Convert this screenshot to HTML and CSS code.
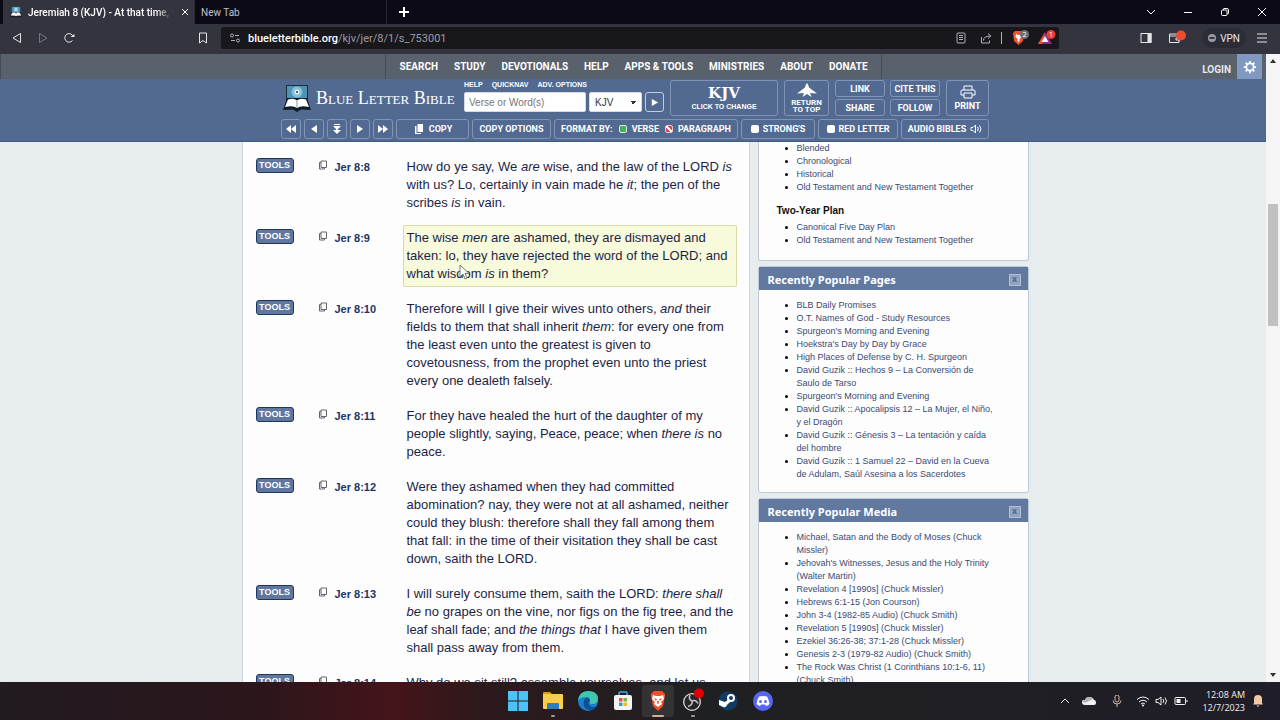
FILE: index.html
```html
<!DOCTYPE html>
<html lang="en">

<head>
    <meta charset="UTF-8">
    <meta name="viewport" content="width=device-width, initial-scale=1.0">
    <title>Jeremiah 8 (KJV) - At that time, saith the LORD</title>
    <link rel="stylesheet" href="styles.css">
</head>

<body>
    <!-- shared symbols -->
    <svg class="defs" aria-hidden="true">
        <symbol id="copy" viewBox="0 0 10 10">
            <path d="M3 1h5.500v6.500h-5.500z M3 2.500h-1.500v6.500h5v-1.500" fill="none" stroke="currentColor" />
        </symbol>
        <symbol id="logo" viewBox="0 0 28 28">
            <rect x="3" y="1" width="22" height="18" fill="#17303f" />
            <rect x="4" y="2" width="20" height="13" fill="#4f93b4" />
            <circle cx="14" cy="8" r="5.500" fill="#86bfd8" />
            <circle cx="14" cy="8" r="2.500" fill="#e2f4fb" />
            <circle cx="14" cy="8" r="1" fill="#1d3b50" />
            <path d="M4 14L0 26l10-.5 4 2.500 4-2.500 10 .5-4-12z" fill="#101c28" />
            <path d="M5 15.500q6-2 9 1 3-3 9-1l3 7.500q-8-2-12 1-4-3-12-1z" fill="#fff" />
            <path d="M14 16.500v7" stroke="#8a97a5" />
        </symbol>
    </svg>

    <header class="titlebar">
        <div class="tab active">
            <svg class="favicon" viewBox="0 0 28 28"><use href="#logo" /></svg>
            <span class="tab-title">Jeremiah 8 (KJV) - At that time, s</span>
            <button class="tab-close" aria-label="Close tab"><svg viewBox="0 0 8 8"><path d="M1 1l6 6M7 1L1 7" /></svg></button>
        </div>
        <div class="tab">New Tab</div>
        <button class="new-tab" aria-label="New tab"><svg viewBox="0 0 10 10"><path d="M5 0v10M0 5h10" /></svg></button>
        <div class="window-controls">
            <button aria-label="Tab search"><svg viewBox="0 0 10 10"><path d="M1 3l4 4 4-4" /></svg></button>
            <button aria-label="Minimize"><svg viewBox="0 0 10 10"><path d="M1 5.500h8" /></svg></button>
            <button aria-label="Restore"><svg viewBox="0 0 10 10"><rect x="1.500" y="3" width="5.500" height="5.500" rx="1" /><path d="M3.500 3V2q0-.5.5-.5h3q1.500 0 1.500 1.500v3q0 1-1 1" /></svg></button>
            <button aria-label="Close"><svg viewBox="0 0 10 10"><path d="M1 1l8 8M9 1L1 9" /></svg></button>
        </div>
    </header>

    <div class="toolbar">
        <div class="nav-buttons">
            <button aria-label="Back"><svg viewBox="0 0 12 12"><path d="M9.500 1.500v9L2 6z" /></svg></button>
            <button aria-label="Forward" disabled><svg viewBox="0 0 12 12"><path d="M2.500 1.500v9L10 6z" /></svg></button>
            <button aria-label="Reload"><svg viewBox="0 0 12 12"><path d="M9.500 8.500a4.300 4.300 0 1 1 .8-3.500" /><path d="M7.500 5h4V2z" fill="currentColor" stroke="none" /></svg></button>
        </div>
        <button class="bookmark" aria-label="Bookmark"><svg viewBox="0 0 12 12"><path d="M2.500 1h7v10L6 8.500 2.500 11z" /></svg></button>
        <div class="address">
            <svg viewBox="0 0 12 12"><circle cx="3" cy="3.500" r="1.500" /><circle cx="9" cy="8.500" r="1.500" /><path d="M6 3.500h4M2 8.500h4" /></svg>
            <span class="url"><b>blueletterbible.org</b>/kjv/jer/8/1/s_753001</span>
            <svg viewBox="0 0 12 12"><rect x="2" y="1" width="8" height="10" rx="1" /><path d="M4 3.500h4M4 5.500h4M4 7.500h4" /></svg>
            <svg viewBox="0 0 12 12"><path d="M1.500 5v6h8V8.500M3.500 8.500q0-4.500 7-4.500M8 1.500L10.800 4 8 6.500" /></svg>
            <i class="divider"></i>
            <svg class="shield" viewBox="0 0 18 16"><path d="M2 3l2-2h7l2 2-1 8-4.500 4L3 11z" fill="#f2512c" stroke="none" /><path d="M5 4l2 1h1l2-1 .5 3L8.500 9v2l-1 1-1-1V9l-2-2z" fill="#fff" stroke="none" /><circle cx="13.500" cy="4.500" r="4.500" fill="#6c7078" stroke="none" /><text x="13.500" y="7">2</text></svg>
            <svg class="shield" viewBox="0 0 18 16"><path d="M7 2l7 12H0z" fill="#8b2a8f" stroke="none" /><path d="M7 2L0 14h4z" fill="#f2512c" stroke="none" /><path d="M7 6l3.500 6h-7z" fill="#fff" stroke="none" /><circle cx="13" cy="4.500" r="4.500" fill="#e8402f" stroke="none" /><text x="13" y="7">1</text></svg>
        </div>
        <div class="extras">
            <svg viewBox="0 0 12 12"><rect x="1" y="1.500" width="10" height="9" /><path d="M8 1.500h3v9H8z" fill="currentColor" /></svg>
            <svg class="wallet" viewBox="0 0 18 12"><path d="M11 2H1.500v8.500H11V8M1.500 4H11M8 6h4v2H8z" /><circle cx="13" cy="3.500" r="5" fill="#ee4b2f" stroke="none" /></svg>
            <button class="vpn"><i></i>VPN</button>
            <button aria-label="Menu"><svg viewBox="0 0 12 12"><path d="M1 2h10M1 6h10M1 10h10" /></svg></button>
        </div>
    </div>

    <div class="viewport">
        <div class="page">
            <div class="site-nav">
                <nav class="menu">
                    <a href="#">SEARCH</a>
                    <a href="#">STUDY</a>
                    <a href="#">DEVOTIONALS</a>
                    <a href="#">HELP</a>
                    <a href="#">APPS &amp; TOOLS</a>
                    <a href="#">MINISTRIES</a>
                    <a href="#">ABOUT</a>
                    <a href="#">DONATE</a>
                </nav>
                <div class="account">
                    <a href="#">LOGIN</a>
                    <button class="settings" aria-label="Settings"><svg viewBox="0 0 16 16"><circle cx="8" cy="8" r="4.200" fill="none" stroke="#fff" stroke-width="2" /><path d="M8 1v2.500M8 12.500V15M1 8h2.500M12.500 8H15M3 3l2 2M11 11l2 2M13 3l-2 2M5 11l-2 2" stroke="#fff" stroke-width="2" /></svg></button>
                </div>
            </div>

            <div class="site-header">
                <div class="header-row">
                    <a class="brand" href="#">
                        <svg viewBox="0 0 28 28"><use href="#logo" /></svg>
                        <span>Blue Letter Bible</span>
                    </a>
                    <form class="search">
                        <div class="search-links">
                            <a href="#">HELP</a>
                            <a href="#">QUICKNAV</a>
                            <a href="#">ADV. OPTIONS</a>
                        </div>
                        <div class="search-fields">
                            <input type="text" placeholder="Verse or Word(s)" aria-label="Verse or Word(s)">
                            <select aria-label="Translation">
                                <option>KJV</option>
                            </select>
                            <button class="box go" type="button" aria-label="Go"><svg viewBox="0 0 10 10"><path d="M2 1l7 4-7 4z" /></svg></button>
                        </div>
                    </form>
                    <button class="box version"><strong>KJV</strong>CLICK TO CHANGE</button>
                    <button class="box to-top"><svg viewBox="0 0 20 14"><path d="M10 0q1.500 1.500 2 4.500l8 6q-4-.5-7-.5l1.500 4L10 11l-4.500 3L7 10q-3 0-7 .5l8-6Q8.500 1.500 10 0z" /></svg>RETURN<br>TO TOP</button>
                    <div class="share">
                        <button class="box">LINK</button>
                        <button class="box">CITE THIS</button>
                        <button class="box">SHARE</button>
                        <button class="box">FOLLOW</button>
                    </div>
                    <button class="box print"><svg viewBox="0 0 16 14"><path d="M4 5V1h8v4M4 10H1V6q0-1 1-1h12q1 0 1 1v4h-3M4 8h8v5H4z" fill="none" stroke="currentColor" /></svg>PRINT</button>
                </div>
                <div class="tool-row">
                    <button class="box" aria-label="Previous chapter"><svg viewBox="0 0 12 10"><path d="M6 1v8L1 5zM11 1v8L6 5z" /></svg></button>
                    <button class="box" aria-label="Previous verse"><svg viewBox="0 0 12 10"><path d="M9 1v8L3 5z" /></svg></button>
                    <button class="box" aria-label="Choose chapter"><svg viewBox="0 0 12 10"><path d="M3 0h6v1H3zM2 2h8L6 6zM5 5h2v1h3L6 10 2 6h3z" /></svg></button>
                    <button class="box" aria-label="Next verse"><svg viewBox="0 0 12 10"><path d="M3 1v8l6-4z" /></svg></button>
                    <button class="box" aria-label="Next chapter"><svg viewBox="0 0 12 10"><path d="M1 1v8l5-4zM6 1v8l5-4z" /></svg></button>
                    <button class="box copy"><svg viewBox="0 0 10 10"><path d="M3.500 0H9v8H3.500zM1 2h1.500v7H7v1H1z" /></svg>COPY</button>
                    <button class="box copy-options">COPY OPTIONS</button>
                    <div class="box format">FORMAT BY:
                        <label class="by-verse"><input type="radio" name="format" checked>VERSE</label>
                        <label class="by-paragraph"><input type="radio" name="format">PARAGRAPH</label>
                    </div>
                    <label class="box strongs"><input type="checkbox">STRONG'S</label>
                    <label class="box red-letter"><input type="checkbox">RED LETTER</label>
                    <button class="box audio">AUDIO BIBLES<svg viewBox="0 0 12 10"><path d="M1 3.500h2L5.500 1v8L3 6.500H1zM7.500 3q1.500 2 0 4M9.500 1.500q3 3.500 0 7" fill="none" stroke="currentColor" /></svg></button>
                </div>
            </div>

            <div class="content">
                <main class="verses">
                    <article class="verse">
                        <button class="tools">TOOLS</button>
                        <svg class="copy-icon"><use href="#copy" /></svg>
                        <a class="ref" href="#">Jer 8:8</a>
                        <p>How do ye say, We <em>are</em> wise, and the law of the LORD <em>is</em> with us? Lo, certainly in vain made he <em>it</em>; the pen of the scribes <em>is</em> in vain.</p>
                    </article>
                    <article class="verse current">
                        <button class="tools">TOOLS</button>
                        <svg class="copy-icon"><use href="#copy" /></svg>
                        <a class="ref" href="#">Jer 8:9</a>
                        <p>The wise <em>men</em> are ashamed, they are dismayed and taken: lo, they have rejected the word of the LORD; and what wisdom <em>is</em> in them?</p>
                        <svg class="pointer" viewBox="0 0 10 16"><path d="M1 1v12l3-3 2 5 2-1-2-4.500h4z" /></svg>
                    </article>
                    <article class="verse">
                        <button class="tools">TOOLS</button>
                        <svg class="copy-icon"><use href="#copy" /></svg>
                        <a class="ref" href="#">Jer 8:10</a>
                        <p>Therefore will I give their wives unto others, <em>and</em> their fields to them that shall inherit <em>them</em>: for every one from the least even unto the greatest is given to covetousness, from the prophet even unto the priest every one dealeth falsely.</p>
                    </article>
                    <article class="verse">
                        <button class="tools">TOOLS</button>
                        <svg class="copy-icon"><use href="#copy" /></svg>
                        <a class="ref" href="#">Jer 8:11</a>
                        <p>For they have healed the hurt of the daughter of my people slightly, saying, Peace, peace; when <em>there is</em> no peace.</p>
                    </article>
                    <article class="verse">
                        <button class="tools">TOOLS</button>
                        <svg class="copy-icon"><use href="#copy" /></svg>
                        <a class="ref" href="#">Jer 8:12</a>
                        <p>Were they ashamed when they had committed abomination? nay, they were not at all ashamed, neither could they blush: therefore shall they fall among them that fall: in the time of their visitation they shall be cast down, saith the LORD.</p>
                    </article>
                    <article class="verse">
                        <button class="tools">TOOLS</button>
                        <svg class="copy-icon"><use href="#copy" /></svg>
                        <a class="ref" href="#">Jer 8:13</a>
                        <p>I will surely consume them, saith the LORD: <em>there shall be</em> no grapes on the vine, nor figs on the fig tree, and the leaf shall fade; and <em>the things that</em> I have given them shall pass away from them.</p>
                    </article>
                    <article class="verse">
                        <button class="tools">TOOLS</button>
                        <svg class="copy-icon"><use href="#copy" /></svg>
                        <a class="ref" href="#">Jer 8:14</a>
                        <p>Why do we sit still? assemble yourselves, and let us</p>
                    </article>
                </main>

                <aside class="sidebar">
                    <section class="panel plans">
                        <ul>
                            <li><a href="#">Blended</a></li>
                            <li><a href="#">Chronological</a></li>
                            <li><a href="#">Historical</a></li>
                            <li><a href="#">Old Testament and New Testament Together</a></li>
                        </ul>
                        <h3>Two-Year Plan</h3>
                        <ul>
                            <li><a href="#">Canonical Five Day Plan</a></li>
                            <li><a href="#">Old Testament and New Testament Together</a></li>
                        </ul>
                    </section>
                    <section class="panel">
                        <h2>Recently Popular Pages <button aria-label="Close">x</button></h2>
                        <ul>
                            <li><a href="#">BLB Daily Promises</a></li>
                            <li><a href="#">O.T. Names of God - Study Resources</a></li>
                            <li><a href="#">Spurgeon's Morning and Evening</a></li>
                            <li><a href="#">Hoekstra's Day by Day by Grace</a></li>
                            <li><a href="#">High Places of Defense by C. H. Spurgeon</a></li>
                            <li><a href="#">David Guzik :: Hechos 9 – La Conversión de Saulo de Tarso</a></li>
                            <li><a href="#">Spurgeon's Morning and Evening</a></li>
                            <li><a href="#">David Guzik :: Apocalipsis 12 – La Mujer, el Niño, y el Dragón</a></li>
                            <li><a href="#">David Guzik :: Génesis 3 – La tentación y caída del hombre</a></li>
                            <li><a href="#">David Guzik :: 1 Samuel 22 – David en la Cueva de Adulam, Saúl Asesina a los Sacerdotes</a></li>
                        </ul>
                    </section>
                    <section class="panel">
                        <h2>Recently Popular Media <button aria-label="Close">x</button></h2>
                        <ul>
                            <li><a href="#">Michael, Satan and the Body of Moses (Chuck Missler)</a></li>
                            <li><a href="#">Jehovah's Witnesses, Jesus and the Holy Trinity (Walter Martin)</a></li>
                            <li><a href="#">Revelation 4 [1990s] (Chuck Missler)</a></li>
                            <li><a href="#">Hebrews 6:1-15 (Jon Courson)</a></li>
                            <li><a href="#">John 3-4 (1982-85 Audio) (Chuck Smith)</a></li>
                            <li><a href="#">Revelation 5 [1990s] (Chuck Missler)</a></li>
                            <li><a href="#">Ezekiel 36:26-38; 37:1-28 (Chuck Missler)</a></li>
                            <li><a href="#">Genesis 2-3 (1979-82 Audio) (Chuck Smith)</a></li>
                            <li><a href="#">The Rock Was Christ (1 Corinthians 10:1-6, 11) (Chuck Smith)</a></li>
                        </ul>
                    </section>
                </aside>
            </div>
        </div>
        <div class="scrollbar">
            <i class="arrow up"></i>
            <div class="track"><i class="thumb"></i></div>
            <i class="arrow down"></i>
        </div>
    </div>

    <footer class="taskbar">
        <div class="apps">
            <button aria-label="Start"><svg viewBox="0 0 20 20"><path d="M0 0h9.500v9.500H0zM10.500 0H20v9.500h-9.500zM0 10.500h9.500V20H0zM10.500 10.500H20V20h-9.500z" fill="#4cc2f5" /></svg></button>
            <button class="running" aria-label="File Explorer"><svg viewBox="0 0 20 20"><path d="M0 2q0-1 1-1h6l2 2v4H0z" fill="#d99a1c" /><rect y="3" width="20" height="15" rx="1" fill="#fbce4a" /><path d="M4 18v-5q0-1 1-1h10q1 0 1 1v5z" fill="#2a7fc4" /></svg></button>
            <button aria-label="Edge"><svg viewBox="0 0 20 20"><circle cx="10" cy="10" r="10" fill="#1b7fd0" /><path d="M0 10Q1 0 10 0q10 0 10 8 0 5-6 5-3 0-2-2 1-5-4-5-6 0-8 4z" fill="#3fc8b0" /><path d="M6 9q-2 8 5 10 5 0 8-4-4 2-7 0-3-3 0-5-1-4-4-3z" fill="#10508f" /></svg></button>
            <button aria-label="Microsoft Store"><svg viewBox="0 0 20 20"><path d="M6 5V2q0-1 1-1h6q1 0 1 1v3" fill="none" stroke="#3bb0e8" stroke-width="1.500" /><rect x="1" y="4" width="18" height="15" rx="2" fill="#f2f4f6" /><path d="M6 7h3.500v3.500H6z" fill="#e8502f" /><path d="M10.500 7H14v3.500h-3.500z" fill="#7db83a" /><path d="M6 11.500h3.500V15H6z" fill="#2b9fe0" /><path d="M10.500 11.500H14V15h-3.500z" fill="#f5b829" /></svg></button>
            <button class="running focused" aria-label="Brave"><svg viewBox="0 0 20 20"><path d="M3 3l3-3h8l3 3v2l-2 10-5 5-5-5L3 5z" fill="#f4502a" /><path d="M5 4l3 1h4l3-1 1 4-3 3 1 2-4 3-4-3 1-2-3-3z" fill="#fff" /><path d="M6 7l3 1-1 2zM14 7l-3 1 1 2zM9 10h2l-.5 3h-1z" fill="#f4502a" /></svg></button>
            <button class="running" aria-label="OBS Studio"><svg viewBox="0 0 20 20"><circle cx="9" cy="11" r="8.300" fill="#26262a" stroke="#d8d8d8" stroke-width="1.300" /><path d="M7 4q-2 4 2 6M9 10q1 4-4 5.500M9 10q4-1.500 6 2.500" fill="none" stroke="#c4c4c4" stroke-width="1.500" /><circle cx="16" cy="2.500" r="5" fill="#e00000" /></svg></button>
            <button aria-label="Steam"><svg viewBox="0 0 20 20"><circle cx="10" cy="10" r="9.500" fill="#123a63" /><circle cx="13" cy="7" r="3" fill="#123a63" stroke="#fff" stroke-width="2" /><path d="M1 9l6 2 4-3 2 2-4 4q-1 3-4 2l-4-2z" fill="#fff" /></svg></button>
            <button aria-label="Discord"><svg viewBox="0 0 20 20"><circle cx="10" cy="10" r="10" fill="#5865f2" /><path d="M6 5.500q4-1 8 0 2 3.500 2.500 7.500-1.500 1.500-3.500 2l-1-1.500H8L7 15q-2-.5-3.500-2Q4 9 6 5.500z" fill="#fff" /><circle cx="7.500" cy="10.500" r="1.500" fill="#5865f2" /><circle cx="12.500" cy="10.500" r="1.500" fill="#5865f2" /></svg></button>
        </div>
        <div class="tray">
            <svg class="chevron" viewBox="0 0 12 12"><path d="M2 8l4-4 4 4" /></svg>
            <svg class="cloud" viewBox="0 0 16 12"><path d="M4 10q-3 0-3-3 0-2 3-2 1-3 4-3 4 0 5 3 2 0 2 3 0 2-2 2z" fill="#f1f1f1" stroke="none" /><path d="M1 6q1-2 3-1 1-3 4-3 3 0 4 2L4 8z" fill="#b5b5b8" stroke="none" /></svg>
            <svg class="mic" viewBox="0 0 12 12"><rect x="4" y="0" width="4" height="7" rx="2" /><path d="M2 5.500q0 3.500 4 3.500t4-3.500M6 9v3" /></svg>
            <div class="status">
                <svg viewBox="0 0 14 12"><path d="M1 4.500q6-5 12 0M3 7q4-3.500 8 0M5 9q2-2 4 0" /><circle cx="7" cy="10.500" r="1" fill="currentColor" stroke="none" /></svg>
                <svg viewBox="0 0 14 12"><path d="M1 4.500h2L6 2v8L3 7.500H1zM8 4q1.500 2 0 4M10 2.500q3 3.500 0 7" /></svg>
                <svg viewBox="0 0 14 12"><rect x="1" y="2.500" width="10.500" height="7" rx="1" /><path d="M13 5v2" /><path d="M2.500 4h4v4h-4z" fill="currentColor" stroke="none" /></svg>
            </div>
            <div class="clock">12:08 AM<br>12/7/2023</div>
            <svg class="bell" viewBox="0 0 12 12"><path d="M1 9.500L2 8V4q0-4 4-4t4 4v4l1 1.500zM4.500 10.500h3L6 12z" fill="currentColor" stroke="none" /></svg>
        </div>
    </footer>
</body>

</html>
```

FILE: styles.css
```css
* {
    margin: 0;
    padding: 0;
    box-sizing: border-box;
}

body {
    height: 100vh;
    display: flex;
    flex-direction: column;
    overflow: hidden;
    background: #e7ecef;
    font-family: "Liberation Sans", Arial, sans-serif;
}

button {
    background: none;
    border: none;
    color: inherit;
    font: inherit;
    cursor: pointer;
}

a {
    color: inherit;
    text-decoration: none;
}

svg {
    flex: none;
}

.defs {
    position: absolute;
    width: 0;
    height: 0;
}

/* Browser title bar */
.titlebar {
    flex: none;
    height: 24px;
    display: flex;
    background: #0c0a17;
    color: #fff;
    font: 10px Roboto, "Noto Sans", sans-serif;
}

.titlebar svg,
.toolbar svg {
    fill: none;
    stroke: currentColor;
}

.tab {
    width: 192px;
    display: flex;
    align-items: center;
    padding: 0 6px;
    color: #c2c2c8;
    border-right: 1px solid #2b2936;
}

.tab.active {
    margin-left: 3px;
    background: #34343f;
    color: #fff;
    font-weight: 500;
    padding: 0 5px 0 7px;
}

.tab .favicon {
    width: 12px;
    height: 12px;
    stroke: none;
}

.tab-title {
    flex: 1;
    margin: 0 8px 0 6px;
    overflow: hidden;
    white-space: nowrap;
    -webkit-mask-image: linear-gradient(to right, #000 88%, transparent);
    mask-image: linear-gradient(to right, #000 88%, transparent);
}

.tab-close {
    display: flex;
}

.tab-close svg {
    width: 8px;
    height: 8px;
}

.new-tab {
    width: 34px;
    display: grid;
    place-items: center;
}

.new-tab svg {
    width: 10px;
    height: 10px;
    stroke-width: 2;
}

.window-controls {
    margin-left: auto;
    display: flex;
}

.window-controls button {
    width: 37px;
    display: grid;
    place-items: center;
}

.window-controls svg {
    width: 10px;
    height: 10px;
}

/* Browser toolbar */
.toolbar {
    flex: none;
    height: 30px;
    display: flex;
    align-items: center;
    padding-bottom: 2px;
    background: #34343f;
    color: #e4e4e8;
    font: 11px Roboto, "Noto Sans", sans-serif;
}

.toolbar svg {
    width: 12px;
    height: 12px;
}

.toolbar button {
    display: flex;
    align-items: center;
}

.nav-buttons {
    display: flex;
    gap: 14px;
    margin-left: 11px;
}

.nav-buttons button:disabled {
    color: #767681;
}

.bookmark {
    margin-left: 122px;
}

.address {
    flex: 0 1 838px;
    height: 22px;
    margin-left: 12px;
    padding: 0 3px 0 8px;
    display: flex;
    align-items: center;
    gap: 13px;
    background: #17171c;
    border-radius: 3px;
    color: #b0b0b6;
}

.url {
    flex: 1;
    margin-left: -6px;
    white-space: nowrap;
    color: #9c9ca3;
}

.url b {
    font-weight: 500;
    color: #fff;
}

.divider {
    width: 1px;
    height: 12px;
    background: #b0b0b6;
    margin: 0 -4px;
}

.toolbar .shield {
    width: 18px;
    height: 16px;
}

.shield text {
    font: 7px "Open Sans", sans-serif;
    text-anchor: middle;
    fill: #fff;
    stroke: none;
}

.shield + .shield {
    margin-left: -4px;
}

.extras {
    margin-left: auto;
    margin-right: 12px;
    display: flex;
    align-items: center;
    gap: 16px;
}

.toolbar .wallet {
    width: 18px;
    height: 12px;
    overflow: visible;
}

.vpn {
    gap: 4px;
    height: 20px;
    padding: 0 6px;
    border-radius: 10px;
    background: #2c2c36;
    font-size: 10px;
}

.vpn i {
    width: 8px;
    height: 8px;
    border: solid #9a9aa2;
    border-width: 3px 1px;
    border-radius: 50%;
    background: #2c2c36;
}

.vpn + button {
    margin-left: -6px;
}

/* Page area */
.viewport {
    flex: 1;
    min-height: 0;
    display: flex;
}

.page {
    flex: 1;
    min-width: 0;
    display: flex;
    flex-direction: column;
    overflow: hidden;
}

.scrollbar {
    width: 14px;
    display: flex;
    flex-direction: column;
    align-items: center;
    padding: 5px 0;
    background: #f5f5f5;
}

.track {
    flex: 1;
    width: 10px;
}

.thumb {
    display: block;
    height: 20%;
    margin-top: 141px;
    background: #c1c1c1;
}

.arrow {
    border: 3px solid transparent;
}

.arrow.up {
    border-top: 0;
    border-bottom: 4px solid #333;
}

.arrow.down {
    border-bottom: 0;
    border-top: 4px solid #333;
}

/* Top menu */
.site-nav {
    flex: none;
    height: 25px;
    display: grid;
    grid-template-columns: 1fr auto 1fr;
    background: #59616c;
    border-left: 1px solid #454c56;
    color: #fff;
    font: bold 10px Roboto, sans-serif;
}

.menu {
    grid-column: 2;
    display: flex;
    align-items: center;
    gap: 16px;
    padding: 0 13px;
    border: solid #464d57;
    border-width: 0 1px;
}

.account {
    display: flex;
    justify-content: flex-end;
    align-items: center;
    gap: 6px;
}

.account a {
    margin-top: 6px;
    color: #e4e7eb;
}

.settings {
    width: 25px;
    height: 25px;
    margin-right: 4px;
    display: grid;
    place-items: center;
    background: #8099c1;
}

.settings svg {
    width: 14px;
    height: 14px;
}

/* Blue header */
.site-header {
    flex: none;
    height: 63px;
    display: flex;
    flex-direction: column;
    align-items: center;
    gap: 3px;
    padding: 1px 0 0 4px;
    background: #526a92;
    border-bottom: 1px solid #3f5a86;
    color: #fff;
    font: bold 9px Roboto, "Liberation Sans", sans-serif;
}

.header-row,
.tool-row {
    width: 708px;
    display: flex;
}

.header-row {
    height: 36px;
    gap: 6px;
}

.tool-row {
    height: 20px;
    gap: 3px;
}

.box {
    display: flex;
    align-items: center;
    justify-content: center;
    border: 1px solid #8294b4;
    border-radius: 3px;
    white-space: nowrap;
}

.box svg {
    fill: currentColor;
}

.brand {
    flex: 1;
    min-width: 0;
    display: flex;
    align-items: center;
    gap: 5px;
    padding-left: 2px;
    font: small-caps 18px "Liberation Serif", serif;
    white-space: nowrap;
}

.brand svg {
    width: 28px;
    height: 28px;
}

.search {
    width: 200px;
}

.search-links {
    display: flex;
    gap: 9px;
    height: 12px;
    font: bold 7px/9px "Liberation Sans", sans-serif;
}

.search-fields {
    display: flex;
    gap: 3px;
    height: 20px;
}

.search-fields input {
    flex: 1;
    min-width: 0;
    padding: 0 4px;
    border: 1px solid #d5dbe6;
    border-radius: 2px;
    font: 10px "Liberation Sans", sans-serif;
}

.search-fields select {
    appearance: none;
    width: 53px;
    padding: 0 5px;
    border: 1px solid #d5dbe6;
    border-radius: 2px;
    background:
        linear-gradient(to top right, transparent 50%, #333 50%) right 8px top 8px / 3px 3px no-repeat,
        linear-gradient(to top left, transparent 50%, #333 50%) right 5px top 8px / 3px 3px no-repeat,
        #fff;
    color: #333;
    font: 10px "Liberation Sans", sans-serif;
}

.go {
    width: 19px;
    border-color: #c3cddd;
}

.go svg {
    width: 9px;
    height: 9px;
}

.version {
    width: 108px;
    flex-direction: column;
    font: bold 7px/9px "Liberation Sans", sans-serif;
}

.version strong {
    font: bold 15px/17px "DejaVu Serif", serif;
}

.to-top {
    width: 45px;
    flex-direction: column;
    font-size: 8px;
    line-height: 7px;
}

.to-top svg {
    width: 20px;
    height: 14px;
    margin-bottom: 2px;
}

.share {
    display: grid;
    grid-template-columns: 50px 50px;
    gap: 2px 5px;
}

.print {
    width: 43px;
    flex-direction: column;
    gap: 2px;
}

.print svg {
    width: 16px;
    height: 14px;
}

.tool-row .box {
    flex: 0 0 20px;
    gap: 4px;
}

.tool-row svg {
    width: 12px;
    height: 10px;
}

.tool-row .copy {
    flex-basis: 73px;
}

.tool-row .copy-options {
    flex-basis: 79px;
}

.tool-row .format {
    flex-basis: 184px;
    gap: 6px;
}

.tool-row .strongs {
    flex-basis: 74px;
}

.tool-row .red-letter {
    flex-basis: 80px;
}

.tool-row .audio {
    flex-basis: 88px;
}

.tool-row label {
    display: flex;
    align-items: center;
    gap: 5px;
}

.tool-row input {
    appearance: none;
    width: 8px;
    height: 8px;
    border-radius: 2px;
    background: #fff;
}

.tool-row .by-verse input {
    border: 1px solid #d9f0dd;
    background: #46b05c;
}

.tool-row .by-paragraph input {
    border: 1px solid #f3c5c9;
    background: linear-gradient(45deg, #d9465a 40%, #fff 40%, #fff 60%, #d9465a 60%);
}

/* Verses and sidebar */
.content {
    flex: 1;
    min-height: 0;
    width: 791px;
    margin: 0 auto;
    padding-left: 4px;
    display: flex;
    align-items: flex-start;
    gap: 8px;
}

.verses {
    flex: 1;
    display: flex;
    flex-direction: column;
    gap: 9px;
    padding: 12px 12px 0 13px;
    background: #fdfdfe;
    border: solid #d0d9e2;
    border-width: 0 1px;
}

.verse {
    display: grid;
    grid-template-columns: 62px 17px 68px 1fr;
    align-items: start;
    position: relative;
}

.tools {
    width: 38px;
    height: 15px;
    margin-top: 4px;
    background: #60779f;
    border: 1px solid #23345c;
    border-radius: 3px;
    color: #fff;
    font-size: 9px;
    font-weight: bold;
    line-height: 13px;
}

.copy-icon {
    width: 10px;
    height: 10px;
    margin-top: 6px;
    color: #666;
}

.ref {
    margin-top: 4px;
    color: #223468;
    font-size: 11px;
    font-weight: bold;
    line-height: 18px;
}

.verse p {
    padding: 3px 0 3px 3px;
    border: 1px solid transparent;
    color: #1d1f45;
    font-size: 13px;
    line-height: 18px;
}

.verse.current p {
    background: #f7fadb;
    border-color: #dadba6;
    border-radius: 2px;
}

.pointer {
    position: absolute;
    left: 203px;
    top: 39px;
    width: 10px;
    height: 16px;
    fill: #fff;
    stroke: #777;
}

.sidebar {
    width: 271px;
    display: flex;
    flex-direction: column;
    gap: 5px;
}

.panel {
    background: #fdfdfe;
    border: 1px solid #bfcad8;
    border-radius: 3px;
    padding-bottom: 11px;
    font-size: 9px;
    line-height: 13px;
}

.panel.plans {
    padding-bottom: 13px;
    border-top: none;
    border-radius: 0 0 3px 3px;
}

.panel h2 {
    height: 23px;
    display: flex;
    align-items: center;
    justify-content: space-between;
    margin-bottom: 9px;
    padding: 2px 7px 0 9px;
    background: #61789f;
    color: #fff;
    font: bold 11px "Noto Sans", "Open Sans", sans-serif;
}

.panel h2 button {
    width: 12px;
    height: 12px;
    background: #91a3c0;
    border: 1px solid #b3c0d4;
    color: #4b628c;
    font: bold 9px/9px "Liberation Sans", sans-serif;
}

.panel h3 {
    margin: 10px 18px 4px;
    color: #111;
    font-size: 10px;
    line-height: 13px;
}

.panel ul {
    padding: 0 31px 0 38px;
}

.panel a {
    color: #3b4a73;
}

/* Windows taskbar */
.taskbar {
    flex: none;
    height: 38px;
    display: grid;
    grid-template-columns: 1fr auto 1fr;
    background: linear-gradient(to right, #221b22, #2b161b 20%, #45141a 31%, #2b191c 38%, #1f2022 55%, #1f1d27);
    color: #f0f0f2;
    font: 9px "Open Sans", "Noto Sans", sans-serif;
}

.apps {
    grid-column: 2;
    display: flex;
    align-items: center;
    gap: 3px;
}

.apps button {
    position: relative;
    width: 32px;
    height: 32px;
    display: grid;
    place-items: center;
    border-radius: 3px;
}

.apps svg {
    width: 20px;
    height: 20px;
    overflow: visible;
}

.apps .focused {
    background: #333336;
}

.running::after {
    content: "";
    position: absolute;
    left: 50%;
    bottom: 0;
    width: 4px;
    height: 2px;
    margin-left: -2px;
    border-radius: 1px;
    background: #9a9a9e;
}

.focused::after {
    width: 12px;
    margin-left: -6px;
    background: #e0ab97;
}

.tray {
    display: flex;
    align-items: center;
    justify-content: flex-end;
    padding-right: 16px;
}

.tray svg {
    width: 12px;
    height: 12px;
    fill: none;
    stroke: currentColor;
}

.tray .chevron {
    margin-right: 5px;
}

.tray .cloud {
    width: 16px;
    margin: 0 14px 0 0;
}

.tray .chevron + .cloud {
    margin-left: 5px;
}

.tray .mic {
    color: #d6b3a3;
}

.status {
    display: flex;
    gap: 5px;
    margin: 0 14px 0 13px;
}

.tray .status svg {
    width: 14px;
}

.clock {
    text-align: right;
    line-height: 13px;
}

.tray .bell {
    margin-left: 7px;
    color: #f0c9a8;
}
```
